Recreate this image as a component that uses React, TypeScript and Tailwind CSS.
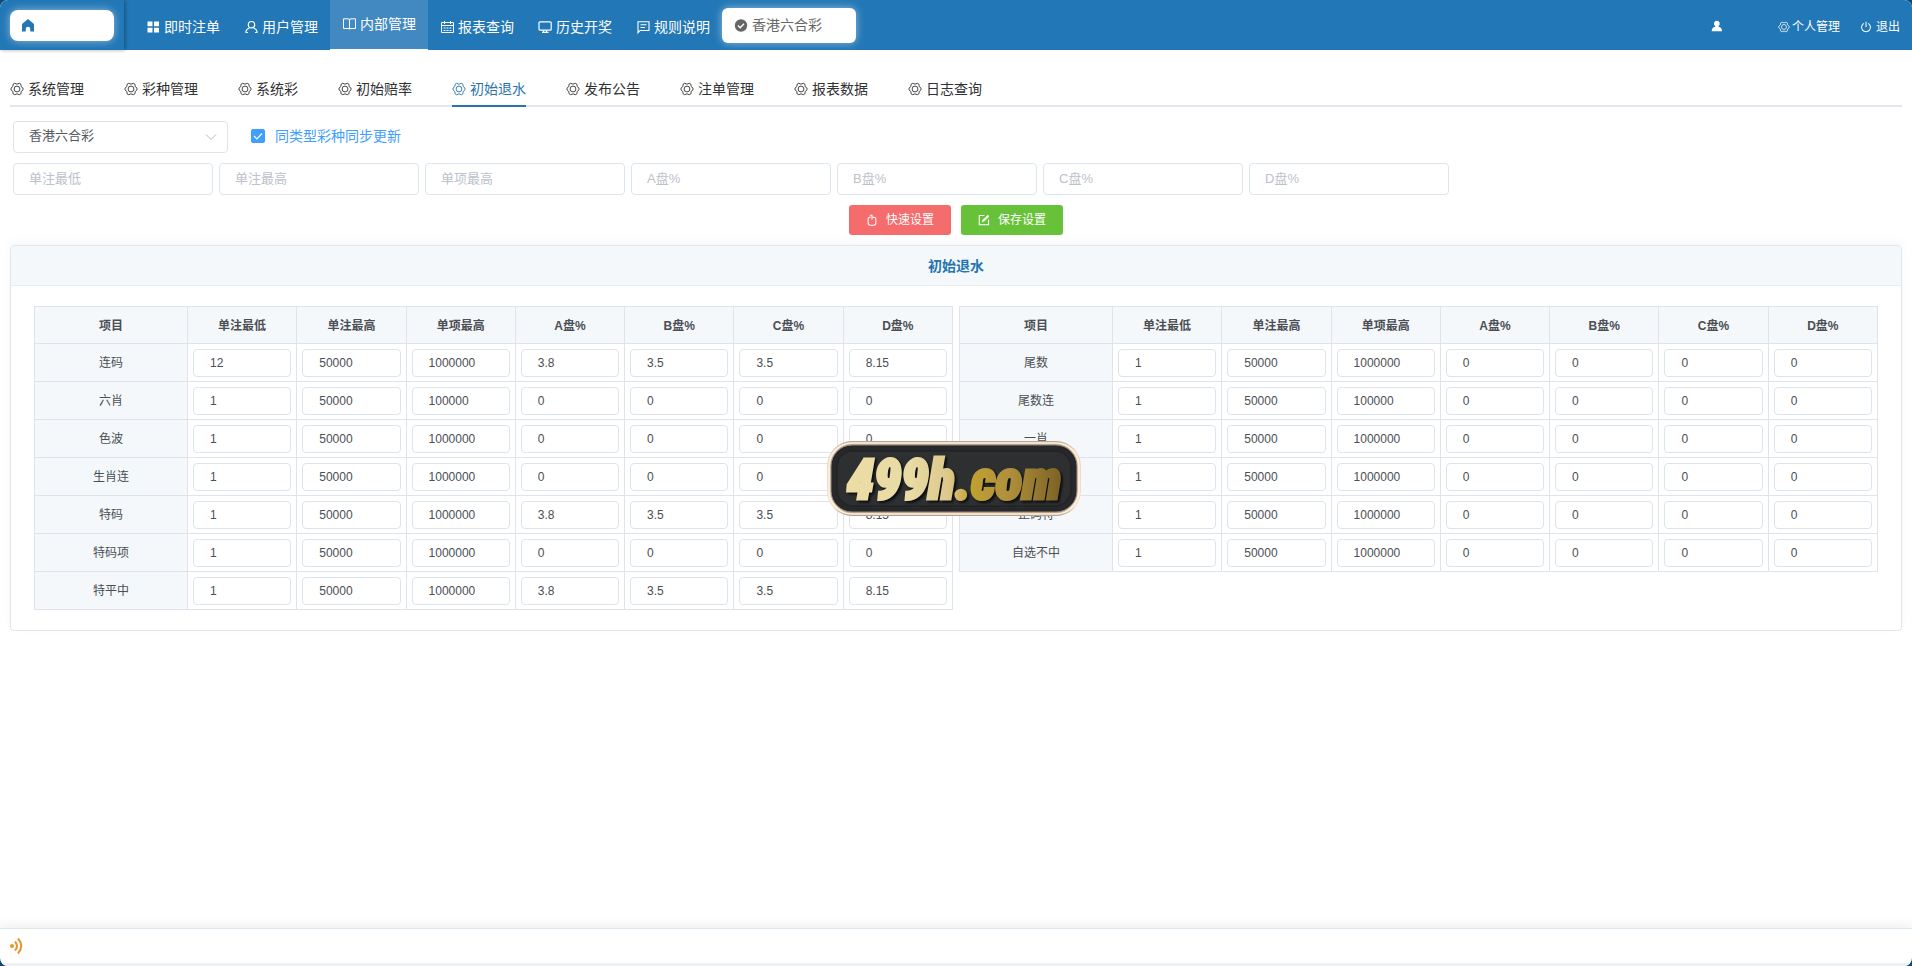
import { useState } from 'react'
import type { ReactNode } from 'react'

interface Item {
  name: string
  values: string[]
}

const COLUMNS = ['单注最低', '单注最高', '单项最高', 'A盘%', 'B盘%', 'C盘%', 'D盘%']

const LEFT: Item[] = [
  { name: '连码', values: ['12', '50000', '1000000', '3.8', '3.5', '3.5', '8.15'] },
  { name: '六肖', values: ['1', '50000', '100000', '0', '0', '0', '0'] },
  { name: '色波', values: ['1', '50000', '1000000', '0', '0', '0', '0'] },
  { name: '生肖连', values: ['1', '50000', '1000000', '0', '0', '0', '0'] },
  { name: '特码', values: ['1', '50000', '1000000', '3.8', '3.5', '3.5', '8.15'] },
  { name: '特码项', values: ['1', '50000', '1000000', '0', '0', '0', '0'] },
  { name: '特平中', values: ['1', '50000', '1000000', '3.8', '3.5', '3.5', '8.15'] },
]

const RIGHT: Item[] = [
  { name: '尾数', values: ['1', '50000', '1000000', '0', '0', '0', '0'] },
  { name: '尾数连', values: ['1', '50000', '100000', '0', '0', '0', '0'] },
  { name: '一肖', values: ['1', '50000', '1000000', '0', '0', '0', '0'] },
  { name: '正码', values: ['1', '50000', '1000000', '0', '0', '0', '0'] },
  { name: '正码特', values: ['1', '50000', '1000000', '0', '0', '0', '0'] },
  { name: '自选不中', values: ['1', '50000', '1000000', '0', '0', '0', '0'] },
]

const TABS = ['系统管理', '彩种管理', '系统彩', '初始赔率', '初始退水', '发布公告', '注单管理', '报表数据', '日志查询']

function Icon({ children, className = 'size-3.5' }: { children: ReactNode; className?: string }) {
  return (
    <svg viewBox="0 0 14 14" fill="none" stroke="currentColor" strokeWidth="1" className={`shrink-0 ${className}`} aria-hidden="true">
      {children}
    </svg>
  )
}

function GearIcon({ className }: { className?: string }) {
  return (
    <Icon className={className}>
      <path
        strokeLinejoin="round"
        strokeWidth=".9"
        d="M13 6.100v1.800L11.200 9.400l-.3 2.400-1.600.9L7 11.800l-2.300.9-1.600-.9-.3-2.400L1 7.900V6.100l1.800-1.500.3-2.400 1.600-.9L7 2.200l2.300-.9 1.600.9.3 2.400z"
      />
      <circle cx="7" cy="7" r="2.900" strokeWidth=".9" />
    </Icon>
  )
}

const NAV: { label: string; icon: ReactNode }[] = [
  {
    label: '即时注单',
    icon: (
      <Icon>
        <path fill="currentColor" stroke="none" d="M1.500 1.500h5v4.800h-5zM8 1.500h5v4.800H8zM1.500 7.700h5v4.800h-5zM8 7.700h5v4.800H8z" />
      </Icon>
    ),
  },
  {
    label: '用户管理',
    icon: (
      <Icon>
        <circle cx="7.500" cy="4.700" r="3.200" strokeWidth="1.200" />
        <path strokeWidth="1.200" d="M2 13V11.500Q2.200 9.300 5.500 8M13 13V11.500Q12.800 9.300 9.500 8M2 12.500h2M11 12.500h2" />
      </Icon>
    ),
  },
  {
    label: '内部管理',
    icon: (
      <Icon>
        <path d="M1.500 1.800H6Q7.500 1.800 7.500 3v9Q7.300 11.500 6 11.500H1.500zM13.500 1.800H9Q7.500 1.800 7.500 3v9Q7.700 11.500 9 11.500h4.500z" />
      </Icon>
    ),
  },
  {
    label: '报表查询',
    icon: (
      <Icon>
        <path d="M1.500 2.500h12v10h-12zM1.500 5.500h12M4.500 1v3M10.500 1v3M3.500 8h2M6.500 8h2M9.500 8h2M3.500 10.500h2M6.500 10.500h2M9.500 10.500h2" />
      </Icon>
    ),
  },
  {
    label: '历史开奖',
    icon: (
      <Icon>
        <rect x="1" y="1.800" width="12.200" height="8.400" rx="1" strokeWidth="1.200" />
        <path strokeWidth="1.200" d="M5.500 10.200v2.300M8.500 10.200v2.300M4 12.400h6.500" />
      </Icon>
    ),
  },
  {
    label: '规则说明',
    icon: (
      <Icon>
        <path strokeWidth="1.100" d="M2 12.800V1.800h11v8.700H4zM4.500 4.700h6M4.500 7.500h4.500" />
      </Icon>
    ),
  },
]

function Header() {
  return (
    <header className="flex h-[50px] shrink-0 bg-[#2277b6] text-white">
      <div className="flex w-[124px] shrink-0 items-center pl-2.5 shadow-[1px_0_4px_rgba(0,0,0,0.35)]">
        <a
          href="#home"
          aria-label="首页"
          className="flex h-[31px] w-[104px] items-center rounded-lg bg-white pl-[11px] text-[#2277b6] shadow-[0_0_8px_rgba(255,255,255,0.5)]"
        >
          <Icon>
            <path fill="currentColor" stroke="none" d="M7 1 13 6V13.500H9.200V10.500Q9.200 8.700 7 8.700T4.800 10.500V13.500H1V6z" />
          </Icon>
        </a>
      </div>
      <nav className="flex pl-2.5 text-sm">
        {NAV.map(({ label, icon }) => {
          const active = label === '内部管理'
          return (
            <a
              key={label}
              href="#nav"
              className={`flex items-center gap-1 px-3 whitespace-nowrap ${
                active ? 'border-b border-white bg-[#4189c0] pb-0.5' : 'pt-1'
              }`}
            >
              {icon}
              {label}
            </a>
          )
        })}
      </nav>
      <button
        type="button"
        className="mt-2 flex h-[35px] w-[134px] items-center gap-1 rounded-md bg-white pb-0.5 pl-3 text-sm text-[#666] shadow-[0_0_8px_rgba(255,255,255,0.5)]"
      >
        <Icon>
          <circle cx="7" cy="7.500" r="6.200" fill="currentColor" stroke="none" />
          <path stroke="#fff" strokeWidth="1.400" d="M4 7.500l2.200 2.200L10 5.700" />
        </Icon>
        香港六合彩
      </button>
      <div className="ml-auto flex items-center gap-5 pt-1 pr-3 text-xs">
        <span className="mr-9 pb-0.5">
          <Icon className="size-3">
            <path fill="currentColor" stroke="none" d="M8 1a3.300 3.300 0 0 1 2 6V8Q14 8.800 14 13h-12Q2 8.800 6 8V7a3.300 3.300 0 0 1 2-6z" />
          </Icon>
        </span>
        <a href="#profile" className="flex items-center gap-0.5">
          <GearIcon className="size-3" />
          个人管理
        </a>
        <a href="#logout" className="flex items-center gap-1">
          <Icon className="size-3">
            <path strokeWidth="1.200" d="M4.500 2.800a5.200 5.200 0 1 0 5 0M7 1v6" />
          </Icon>
          退出
        </a>
      </div>
    </header>
  )
}

function RebateTable({ items }: { items: Item[] }) {
  return (
    <table className="w-full table-fixed border-collapse text-xs text-[#4b4e54]">
      <thead>
        <tr className="h-[37px] bg-[#f4f8fb]">
          <th className="w-1/6 border border-[#dfe4ec] pt-0.5 font-bold">项目</th>
          {COLUMNS.map((c) => (
            <th key={c} className="border border-[#dfe4ec] pt-0.5 font-bold">{c}</th>
          ))}
        </tr>
      </thead>
      <tbody>
        {items.map((item) => (
          <tr key={item.name}>
            <th scope="row" className="border border-[#dfe4ec] bg-[#f4f8fb] font-normal">{item.name}</th>
            {item.values.map((v, i) => (
              <td key={i} className="border border-[#dfe4ec] px-[5px] pt-[5px] pb-1">
                <input
                  aria-label={`${item.name} ${COLUMNS[i]}`}
                  defaultValue={v}
                  className="block h-7 w-full rounded border border-[#dce5ec] bg-white px-4 outline-none focus:border-[#409eff]"
                />
              </td>
            ))}
          </tr>
        ))}
      </tbody>
    </table>
  )
}

function Watermark() {
  return (
    <svg viewBox="0 0 256 78" className="pointer-events-none absolute top-[440px] left-1/2 w-64 -translate-x-[130px]" role="img" aria-label="499h.com">
      <defs>
        <linearGradient id="gold" x1="0" x2="1" y1="0" y2="0">
          <stop offset="0" stopColor="#ecdca6" />
          <stop offset=".3" stopColor="#e9dba4" />
          <stop offset=".48" stopColor="#dcc78a" />
          <stop offset=".58" stopColor="#c0a030" />
          <stop offset=".75" stopColor="#b0913c" />
          <stop offset="1" stopColor="#7c6224" />
        </linearGradient>
        <linearGradient id="rim" x1="0" x2="0" y1="0" y2="1">
          <stop offset="0" stopColor="#b8a48f" />
          <stop offset=".12" stopColor="#e9d6c0" />
          <stop offset=".88" stopColor="#f3e2cf" />
          <stop offset="1" stopColor="#b39d86" />
        </linearGradient>
      </defs>
      <rect x="1" y="1" width="254" height="75" rx="25" fill="url(#rim)" />
      <rect x="3" y="3" width="250" height="71" rx="23" fill="none" stroke="#fff1df" strokeWidth="1.500" />
      <rect x="5" y="5" width="246" height="67" rx="21" fill="#26282b" stroke="#9c8a78" />
      <rect x="11" y="11" width="234" height="55" rx="16" fill="#2d2f31" stroke="#222426" strokeWidth="1.500" />
      <text
        x="128"
        y="59"
        fontSize="55"
        fontWeight="900"
        fontStyle="italic"
        textAnchor="middle"
        fill="url(#gold)"
        stroke="url(#gold)"
        strokeWidth="3"
        className="font-['Liberation_Sans_Narrow','Roboto_Condensed','Open_Sans_Condensed','Roboto',sans-serif] drop-shadow-[2px_2px_1px_#0c0d0e]"
      >
        499h.com
      </text>
    </svg>
  )
}

export default function App() {
  const [sync, setSync] = useState(true)

  return (
    <div className="min-h-screen bg-[#0f4a75] font-['Liberation_Sans','Noto_Sans_CJK_SC',sans-serif]">
      <div className="relative flex min-h-screen flex-col overflow-hidden rounded-lg bg-white">
        <Header />

        <main className="flex-1 px-2.5 pt-[17px]">
          <nav className="flex gap-10 border-b-2 border-[#e4e7ed] text-sm text-[#303133]">
            {TABS.map((tab) => (
              <a
                key={tab}
                href="#tab"
                className={`-mb-0.5 flex h-10 items-center gap-1 border-b-2 pt-1.5 whitespace-nowrap ${
                  tab === '初始退水' ? 'border-[#2b74ab] text-[#2b74ab]' : 'border-transparent'
                }`}
              >
                <GearIcon />
                {tab}
              </a>
            ))}
          </nav>

          <div className="mt-3.5 flex items-center px-[3px]">
            <div className="relative">
              <select
                aria-label="彩种"
                className="h-8 w-[215px] appearance-none rounded border border-[#dce5ec] bg-white px-[15px] pb-0.5 text-[13px] text-[#55585e] outline-none"
              >
                <option>香港六合彩</option>
              </select>
              <Icon className="pointer-events-none absolute top-[9px] right-2.5 size-3.5 text-[#b4bac4]">
                <path d="M2 4.500l5 5 5-5" />
              </Icon>
            </div>
            <label className="ml-[23px] flex items-center gap-2.5 pb-0.5 text-sm text-[#409eff]">
              <span className="relative flex size-3.5">
                <input
                  type="checkbox"
                  checked={sync}
                  onChange={(e) => setSync(e.target.checked)}
                  className="size-3.5 appearance-none rounded-xs border border-[#409eff] checked:bg-[#409eff]"
                />
                <Icon className="pointer-events-none absolute inset-0 size-3.5 text-white">
                  <path strokeWidth="1.200" d="M3 7l2.800 2.800L11 4.500" />
                </Icon>
              </span>
              同类型彩种同步更新
            </label>
          </div>

          <div className="mt-2.5 flex flex-wrap gap-1.5 px-[3px]">
            {COLUMNS.map((c) => (
              <input
                key={c}
                aria-label={c}
                placeholder={c}
                className="h-8 w-[200px] rounded border border-[#dce5ec] px-[15px] pb-0.5 text-[13px] outline-none placeholder:text-[#bcc1ca] focus:border-[#409eff]"
              />
            ))}
          </div>

          <div className="mt-2.5 flex justify-center gap-2.5 text-xs text-white">
            <button type="button" className="flex h-[30px] w-[102px] items-center justify-center gap-2 rounded-[3px] bg-[#f56c6c]">
              <Icon className="size-3">
                <path d="M7 6.500V1.500H4.500M5.500 3.500Q2.500 3.500 2.500 6V10.500Q2.500 13 5 13h4Q11.500 13 11.500 10.500V6Q11.500 3.500 7 3.500" strokeWidth="1.200" />
              </Icon>
              快速设置
            </button>
            <button type="button" className="flex h-[30px] w-[102px] items-center justify-center gap-2 rounded-[3px] bg-[#67c23a]">
              <Icon className="size-3">
                <path strokeWidth="1.300" d="M7.500 1.700H1.500v10.800h10.800V6.500" />
                <path fill="currentColor" strokeWidth=".8" d="M5 9l1-2.500 5.500-5 1.300 1.300L7.500 8z" />
              </Icon>
              保存设置
            </button>
          </div>

          <section className="mt-2.5 rounded border border-[#dce7ee] shadow-[0_-3px_8px_rgba(0,0,0,0.04)]">
            <h2 className="flex h-10 items-center justify-center rounded-t border-b border-[#e6eef3] bg-[#f4f8fb] text-sm font-bold text-[#2474ae]">
              初始退水
            </h2>
            <div className="grid grid-cols-2 items-start gap-1.5 px-[23px] py-5">
              <RebateTable items={LEFT} />
              <RebateTable items={RIGHT} />
            </div>
          </section>
        </main>

        <footer className="flex h-[38px] shrink-0 items-center border-t border-b-[3px] border-t-[#dbe7ee] border-b-[#f0f1f2] px-2.5 shadow-[0_-2px_12px_rgba(0,0,0,0.08)]">
          <svg viewBox="0 0 14 18" className="h-[18px] w-3.5 text-[#e8952c]" fill="none" stroke="currentColor" strokeWidth="2" aria-hidden="true">
            <circle cx="2" cy="9" r="2" fill="currentColor" stroke="none" />
            <path d="M5 4.500q4 4.500 0 9M8 1.500q6.500 7.500 0 15" />
          </svg>
        </footer>

        <Watermark />
      </div>
    </div>
  )
}
